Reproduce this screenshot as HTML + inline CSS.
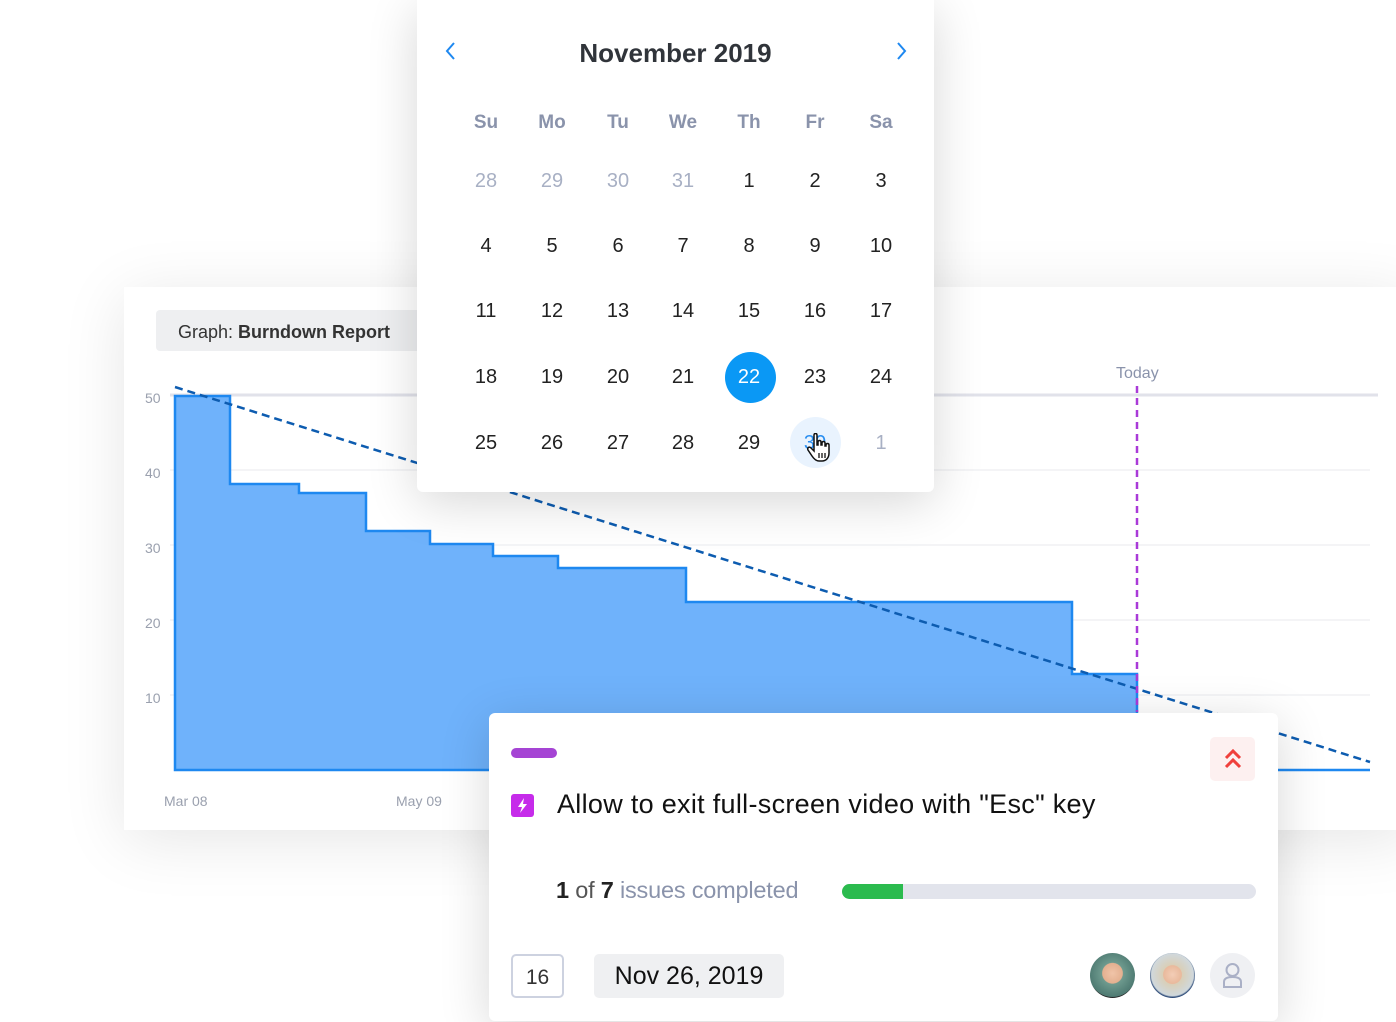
<!DOCTYPE html>
<html><head><meta charset="utf-8"><style>
*{margin:0;padding:0;box-sizing:border-box}
body{width:1396px;height:1022px;overflow:hidden;background:#fff;font-family:"Liberation Sans",sans-serif;position:relative}
.abs{position:absolute}
#chart{left:124px;top:287px;width:1290px;height:543px;background:#fff;box-shadow:0 10px 60px rgba(0,0,0,0.10)}
#cal{left:417px;top:0;width:517px;height:492px;background:#fff;border-radius:0 0 6px 6px;box-shadow:0 10px 50px rgba(0,0,0,0.16)}
.c{position:absolute;width:60px;margin-left:-30px;text-align:center;font-size:20px;color:#222;line-height:24px}
.h{color:#8a93ab;font-weight:bold;font-size:19px}
.g{color:#a8b0c4}
#card{left:489px;top:713px;width:789px;height:308px;background:#fff;border-radius:6px;box-shadow:0 10px 50px rgba(0,0,0,0.16)}
</style></head><body>
<div id="chart" class="abs"></div>
<div class="abs" style="left:156px;top:310px;width:280px;height:41px;background:#eeeff1;border-radius:4px;font-size:18px;color:#333;line-height:45px;padding-left:22px">Graph: <b>Burndown Report</b></div>
<svg class="abs" style="left:0;top:0" width="1396" height="1022">
<g stroke="#e9eaee" stroke-width="1">
<line x1="170" y1="470" x2="1370" y2="470"/><line x1="170" y1="545" x2="1370" y2="545"/><line x1="170" y1="620" x2="1370" y2="620"/><line x1="170" y1="695" x2="1370" y2="695"/>
</g>
<line x1="170" y1="395" x2="1378" y2="395" stroke="#e1e2ea" stroke-width="3"/>
<g font-size="14" fill="#9aa0ae" font-family="Liberation Sans"><text x="145" y="403">50</text><text x="145" y="478">40</text><text x="145" y="553">30</text><text x="145" y="628">20</text><text x="145" y="703">10</text>
<text x="164" y="806">Mar 08</text><text x="396" y="806">May 09</text></g>
<text x="1116" y="378" font-size="16" fill="#8a93ab">Today</text>
<path d="M175,770 L175,396 L230,396 L230,484 L299,484 L299,493 L366,493 L366,531 L430,531 L430,544 L493,544 L493,556 L558,556 L558,568 L686,568 L686,602 L1072,602 L1072,674 L1137,674 L1137,770 Z" fill="#6fb2fb" stroke="#1e88f0" stroke-width="2.5"/>
<line x1="1137" y1="770" x2="1370" y2="770" stroke="#1e88f0" stroke-width="2.5"/>
<line x1="175" y1="387" x2="1370" y2="762" stroke="#0d5cb0" stroke-width="2.5" stroke-dasharray="8,5"/>
<line x1="1137" y1="386" x2="1137" y2="712" stroke="#a93ad8" stroke-width="2.5" stroke-dasharray="7,5"/>
</svg>
<div id="cal" class="abs">
<div class="abs" style="left:0;width:517px;top:38px;text-align:center;font-size:26px;font-weight:bold;color:#30343a">November 2019</div>
<svg class="abs" style="left:25px;top:40px" width="16" height="22"><path d="M12,3 L5,11 L12,19" fill="none" stroke="#1e88f0" stroke-width="2"/></svg>
<svg class="abs" style="left:477px;top:40px" width="16" height="22"><path d="M4,3 L11,11 L4,19" fill="none" stroke="#1e88f0" stroke-width="2"/></svg>
<div class="abs" style="left:308px;top:352px;width:51px;height:51px;border-radius:50%;background:#0a98f5"></div>
<div class="abs" style="left:373px;top:417px;width:51px;height:51px;border-radius:50%;background:#e9f3fe"></div>
</div>
<div id="days"></div>
<script>
var cols=[486,552,618,683,749,815,881],rows=[181,246,311,377,443];
var H=["Su","Mo","Tu","We","Th","Fr","Sa"],s="";
H.forEach(function(t,i){s+='<div class="c h" style="left:'+cols[i]+'px;top:111px">'+t+'</div>'});
var d=[[28,29,30,31,1,2,3],[4,5,6,7,8,9,10],[11,12,13,14,15,16,17],[18,19,20,21,22,23,24],[25,26,27,28,29,30,1]];
d.forEach(function(r,ri){r.forEach(function(n,ci){var cl="c";var st="";
if(ri==0&&ci<4)cl+=" g";if(ri==4&&ci==6)cl+=" g";
if(ri==3&&ci==4)st="color:#fff;";if(ri==4&&ci==5)st="color:#2a8ef0;";
s+='<div class="'+cl+'" style="'+st+'left:'+cols[ci]+'px;top:'+(rows[ri]-12)+'px">'+n+'</div>'})});
document.getElementById("days").innerHTML=s;
</script>
<svg class="abs" style="left:806px;top:433px" width="28" height="30"><path d="M8,2 C8,0 11,0 11,2 L11,12 L12,12 L12,9 C12,7 15,7 15,9 L15,12 L16,12 L16,10 C16,8 19,8 19,10 L19,13 L20,13 L20,12 C20,10 23,10 23,12 L23,20 C23,25 20,28 16,28 L13,28 C10,28 8,26 6,23 L2,17 C1,15 3,13 5,15 L8,18 Z" fill="#fff" stroke="#111" stroke-width="1.5"/><path d="M13,20 L13,25 M16,20 L16,25 M19,20 L19,25" stroke="#111" stroke-width="1.3"/></svg>
<div id="card" class="abs">
<div class="abs" style="left:22px;top:35px;width:46px;height:10px;border-radius:5px;background:#a544d4"></div>
<div class="abs" style="left:721px;top:24px;width:45px;height:44px;border-radius:5px;background:#fdf0f0"></div>
<svg class="abs" style="left:733px;top:34px" width="22" height="24"><path d="M4,11 L11,4 L18,11 M4,20 L11,13 L18,20" fill="none" stroke="#f0403c" stroke-width="3"/></svg>
<div class="abs" style="left:22px;top:81px;width:23px;height:23px;border-radius:3px;background:#c62bea"></div>
<svg class="abs" style="left:22px;top:81px" width="23" height="23"><path d="M13,4 L7,13 L11,13 L9,19 L16,10 L12,10 Z" fill="#fff"/></svg>
<div class="abs" style="left:68px;top:76px;font-size:27px;letter-spacing:0.3px;color:#111;white-space:nowrap">Allow to exit full-screen video with "Esc" key</div>
<div class="abs" style="left:67px;top:164px;font-size:23.5px;letter-spacing:-0.2px;color:#222;white-space:nowrap"><b>1</b> <span style="color:#555">of</span> <b>7</b> <span style="color:#8a93ab">issues completed</span></div>
<div class="abs" style="left:353px;top:171px;width:414px;height:15px;border-radius:8px;background:#e2e4ec"></div>
<div class="abs" style="left:353px;top:171px;width:61px;height:15px;border-radius:8px 0 0 8px;background:#2bbb4e"></div>
<div class="abs" style="left:22px;top:241px;width:53px;height:44px;border:2px solid #cdd2e0;border-radius:5px;text-align:center;line-height:44px;font-size:21px;color:#333">16</div>
<div class="abs" style="left:105px;top:241px;width:190px;height:44px;background:#eff0f2;border-radius:5px;text-align:center;line-height:45px;font-size:25px;color:#111">Nov 26, 2019</div>
<div class="abs" style="left:601px;top:240px;width:45px;height:45px;border-radius:50%;background:radial-gradient(circle at 50% 45%,#f0c4a8 0,#e4b090 30%,#6e9a8e 32%,#4e7a72 70%,#222 72%)"></div>
<div class="abs" style="left:661px;top:240px;width:45px;height:45px;border-radius:50%;background:radial-gradient(circle at 50% 48%,#f3cdb6 0,#e9b99c 28%,#d9cfb8 30%,#d0d8dc 65%,#2c4a78 70%)"></div>
<div class="abs" style="left:721px;top:240px;width:45px;height:45px;border-radius:50%;background:#eff0f3"></div>
<svg class="abs" style="left:721px;top:240px" width="45" height="45"><circle cx="22.5" cy="17" r="6" fill="none" stroke="#aab0c6" stroke-width="2"/><path d="M14,34 L14,29 C14,25 18,24 22.5,24 C27,24 31,25 31,29 L31,34 Z" fill="none" stroke="#aab0c6" stroke-width="2"/></svg>
</div>
</body></html>
